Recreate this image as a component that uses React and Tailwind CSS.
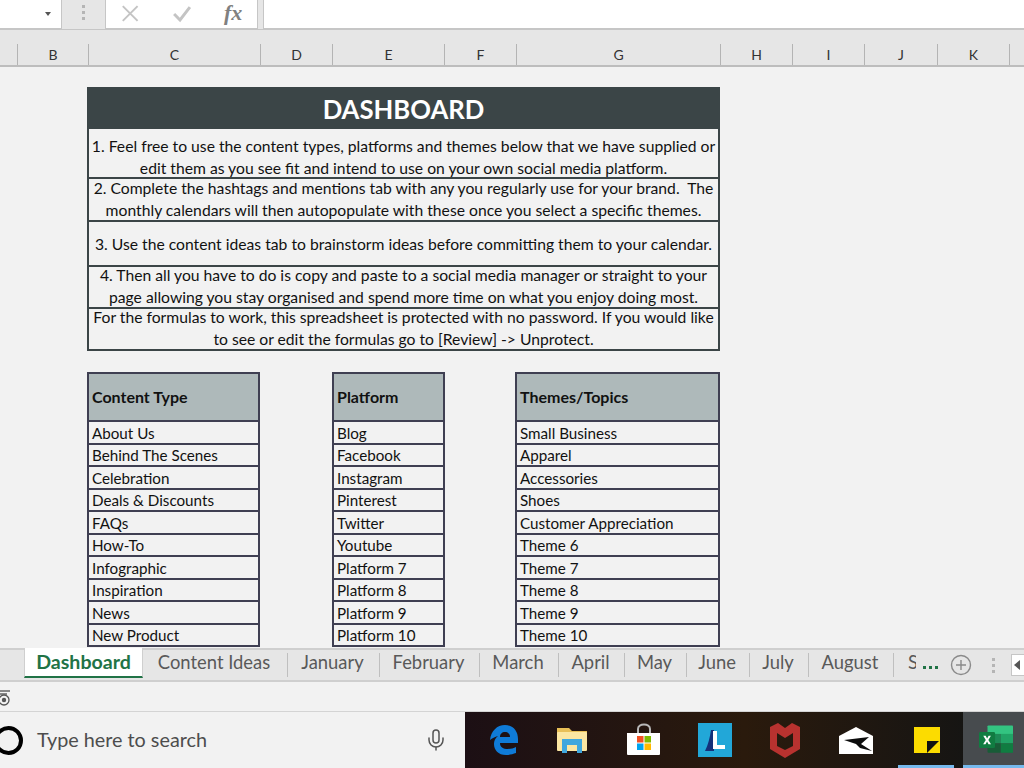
import React from "react";
import { Mic } from "lucide-react";

const columns = [
  ["", "w-[18px]"],
  ["B", "w-[71px]"],
  ["C", "w-[172px]"],
  ["D", "w-[72px]"],
  ["E", "w-[112px]"],
  ["F", "w-[72px]"],
  ["G", "w-[204px]"],
  ["H", "w-[72px]"],
  ["I", "w-[72px]"],
  ["J", "w-[73px]"],
  ["K", "w-[72px]"],
];

const notes = [
  {
    h: "h-[50px] pt-[8px]",
    lines: [
      "1. Feel free to use the content types, platforms and themes below that we have supplied or",
      "edit them as you see fit and intend to use on your own social media platform.",
    ],
  },
  {
    h: "h-[43px] pb-[1px]",
    lines: [
      "2. Complete the hashtags and mentions tab with any you regularly use for your brand.  The",
      "monthly calendars will then autopopulate with these once you select a specific themes.",
    ],
  },
  {
    h: "h-[45px]",
    lines: ["3. Use the content ideas tab to brainstorm ideas before committing them to your calendar."],
  },
  {
    h: "h-[42px] pb-[2px]",
    lines: [
      "4. Then all you have to do is copy and paste to a social media manager or straight to your",
      "page allowing you stay organised and spend more time on what you enjoy doing most.",
    ],
  },
  {
    h: "h-[42px] pb-[2px]",
    lines: [
      "For the formulas to work, this spreadsheet is protected with no password. If you would like",
      "to see or edit the formulas go to [Review] -> Unprotect.",
    ],
  },
];

const lists = [
  {
    title: "Content Type",
    w: "w-[173px]",
    items: ["About Us", "Behind The Scenes", "Celebration", "Deals & Discounts", "FAQs", "How-To", "Infographic", "Inspiration", "News", "New Product"],
  },
  {
    title: "Platform",
    w: "w-[113px]",
    items: ["Blog", "Facebook", "Instagram", "Pinterest", "Twitter", "Youtube", "Platform 7", "Platform 8", "Platform 9", "Platform 10"],
  },
  {
    title: "Themes/Topics",
    w: "w-[205px]",
    items: ["Small Business", "Apparel", "Accessories", "Shoes", "Customer Appreciation", "Theme 6", "Theme 7", "Theme 8", "Theme 9", "Theme 10"],
  },
];

const tabs = [
  ["Content Ideas", "w-[145px]"],
  ["January", "w-[92px]"],
  ["February", "w-[100px]"],
  ["March", "w-[79px]"],
  ["April", "w-[66px]"],
  ["May", "w-[62px]"],
  ["June", "w-[63px]"],
  ["July", "w-[59px]"],
  ["August", "w-[85px]"],
];

const Dots = () => (
  <div className="flex flex-col gap-[3px]">
    <span className="w-[3px] h-[3px] bg-[#b5b5b5]" />
    <span className="w-[3px] h-[3px] bg-[#b5b5b5]" />
    <span className="w-[3px] h-[3px] bg-[#b5b5b5]" />
  </div>
);

const FormulaBar = () => (
  <div className="flex h-[30px] bg-[#e6e6e6] border-b border-[#c6c6c6]">
    <div className="w-[62px] bg-white border-r border-b border-[#c6c6c6] flex items-center justify-end pr-[10px]">
      <span className="w-0 h-0 border-x-[3px] border-x-transparent border-t-[4px] border-t-[#555]" />
    </div>
    <div className="w-[43px] flex items-center justify-center pb-1">
      <Dots />
    </div>
    <div className="w-[153px] bg-white border-x border-b border-[#c6c6c6] relative flex items-center">
      <svg width="153" height="29" viewBox="0 0 153 29" fill="none">
        <path d="M17 6l15 15M32 6L17 21" stroke="#c4c4c4" strokeWidth="2" />
        <path d="M69 14l6 6 10-13" stroke="#c4c4c4" strokeWidth="3" />
      </svg>
      <span className="absolute left-[118px] top-0 text-[22px] leading-[26px] italic font-bold text-[#808080] font-['Liberation_Serif',serif]">
        fx
      </span>
    </div>
    <div className="w-[5px]" />
    <div className="flex-1 bg-white border-l border-b border-[#c6c6c6]" />
  </div>
);

const ColumnHeaders = () => (
  <div className="flex h-[37px] bg-[#e6e6e6] border-b-2 border-[#bdbdbd] pt-[14px]">
    {columns.map(([label, w], i) => (
      <div
        key={i}
        className={`${w} h-[21px] shrink-0 border-r border-[#b4b4b4] flex items-center justify-center text-[14px] text-[#333]`}
      >
        {label}
      </div>
    ))}
  </div>
);

const Dashboard = () => (
  <div className="w-[633px] border-2 border-[#3b4547] border-b-0">
    <div className="h-[40px] bg-[#3b4547] flex items-center justify-center pt-[1px] text-white font-bold text-[25.7px] leading-none">
      DASHBOARD
    </div>
    {notes.map((n, i) => (
      <div
        key={i}
        className={`${n.h} border-b-2 border-[#3b4547] flex flex-col items-center justify-center text-[15.7px] leading-[22px] text-[#111] whitespace-pre`}
      >
        {n.lines.map((l) => (
          <div key={l}>{l}</div>
        ))}
      </div>
    ))}
  </div>
);

const ListTable = ({ list }) => (
  <div className={`${list.w} shrink-0 border-x-2 border-t-2 border-[#3f3f52]`}>
    <div className="h-[48px] bg-[#aeb9ba] border-b-2 border-[#3f3f52] flex items-center pl-[3px] font-bold text-[16px] text-[#111]">
      {list.title}
    </div>
    {list.items.map((item) => (
      <div
        key={item}
        className="h-[22.5px] border-b-2 border-[#3f3f52] pl-[3px] flex items-center pt-[2px] text-[15.2px] leading-none text-[#111]"
      >
        {item}
      </div>
    ))}
  </div>
);

const Sheet = () => (
  <div className="h-[581px] bg-[#f2f2f2] overflow-hidden pl-[87px] pt-[20px]">
    <Dashboard />
    <div className="flex mt-[21px]">
      <ListTable list={lists[0]} />
      <div className="w-[72px] shrink-0" />
      <ListTable list={lists[1]} />
      <div className="w-[70px] shrink-0" />
      <ListTable list={lists[2]} />
    </div>
  </div>
);

const TabBar = () => (
  <div className="flex h-[34px] bg-[#e6e6e6] border-y-2 border-[#cfcfcf] text-[18.4px] text-[#595959]">
    <div className="w-[24px]" />
    <div className="w-[119px] h-[30px] -mt-[2px] bg-white border-x border-[#cfcfcf] border-b-2 border-b-[#217346] flex items-center justify-center font-bold text-[19.6px] text-[#217346]">
      Dashboard
    </div>
    {tabs.map(([t, w]) => (
      <div key={t} className={`${w} flex items-center justify-center`}>
        <div className="flex-1 text-center pb-[5px] pr-[2px]">{t}</div>
        <span className="w-px h-[24px] bg-[#bfbfbf]" />
      </div>
    ))}
    <div className="w-[22px] overflow-hidden pl-[14px] flex items-center pb-[5px]">S</div>
    <div className="w-[34px] flex items-center gap-[3px] pl-[7px] pt-[4px]">
      <span className="w-[3px] h-[3px] bg-[#217346]" />
      <span className="w-[3px] h-[3px] bg-[#217346]" />
      <span className="w-[3px] h-[3px] bg-[#217346]" />
    </div>
    <div className="w-[22px] flex items-center">
      <svg width="22" height="22" viewBox="0 0 22 22" fill="none" className="shrink-0">
        <circle cx="11" cy="11" r="9.5" stroke="#8a8a8a" strokeWidth="1.4" />
        <path d="M11 6v10M6 11h10" stroke="#8a8a8a" strokeWidth="1.4" />
      </svg>
    </div>
    <div className="w-[23px] flex items-center justify-end">
      <Dots />
    </div>
    <div className="flex-1 flex items-center justify-end">
      <div className="w-[13px] h-[22px] bg-white border border-[#c6c6c6] border-r-0 flex items-center pl-[2px]">
        <span className="w-0 h-0 border-y-[5px] border-y-transparent border-r-[6px] border-r-[#555]" />
      </div>
    </div>
  </div>
);

const StatusBar = () => (
  <div className="h-[30px] bg-[#f2f2f2] border-b border-[#d4d4d4] flex items-center overflow-hidden">
    <svg width="14" height="20" viewBox="0 0 14 20" fill="none" className="-ml-[2px]">
      <path d="M0 4h12M0 7h9" stroke="#666" strokeWidth="1.3" />
      <circle cx="6" cy="13" r="5" stroke="#555" strokeWidth="1.3" />
      <circle cx="6" cy="13" r="2.2" fill="#555" />
    </svg>
  </div>
);

const Edge = () => (
  <svg width="28" height="30" viewBox="0 0 28 30">
    <path
      d="M0 15C1 6 7 0 15 0c8 0 13 6 13 14v4H10c0 4 3 6 8 6 3 0 6-1 8-2v6c-3 1-6 2-10 2-8 0-12-5-12-11 0-3 1-6 4-8-3 1-6 2-8 4zm10-3h10c0-3-2-5-5-5s-5 2-5 5z"
      fill="#0f7bd8"
      fillRule="evenodd"
    />
  </svg>
);

const Folder = () => (
  <svg width="31" height="26" viewBox="0 0 31 26">
    <path d="M0 1h12l3 3h15v3H0z" fill="#e8bf57" />
    <rect x="0" y="5" width="30" height="19" rx="1" fill="#fbe6a2" />
    <path d="M5 24v-12h20v12h-5v-6h-10v6z" fill="#3fa7de" />
    <rect x="5" y="24" width="5" height="2" fill="#3fa7de" />
    <rect x="20" y="24" width="5" height="2" fill="#3fa7de" />
  </svg>
);

const Store = () => (
  <svg width="34" height="34" viewBox="0 0 34 34" fill="none">
    <path d="M11 10V6c0-6 12-6 12 0v4" stroke="#b8b8b8" strokeWidth="2" />
    <path d="M0 10h33v21a1 1 0 0 1-1 1H1a1 1 0 0 1-1-1z" fill="#fff" />
    <rect x="10" y="13" width="6.5" height="6.5" fill="#f25022" />
    <rect x="17.5" y="13" width="6.5" height="6.5" fill="#7fba00" />
    <rect x="10" y="20.5" width="6.5" height="6.5" fill="#00a4ef" />
    <rect x="17.5" y="20.5" width="6.5" height="6.5" fill="#ffb900" />
  </svg>
);

const LogoL = () => (
  <svg width="34" height="34" viewBox="0 0 34 34">
    <rect width="34" height="34" fill="#22a7d8" />
    <path d="M7 28c3-6 5-14 6-21h3v21z" fill="#15307a" />
    <path d="M15 8h4v14h8v4H15z" fill="#fff" />
  </svg>
);

const McAfee = () => (
  <svg width="30" height="35" viewBox="0 0 30 35">
    <path
      d="M0 4l8-4 7 5 7-5 8 4v22l-15 9-15-9zm7 6v13l8 4 8-4V10l-8 5z"
      fill="#b8322f"
      fillRule="evenodd"
    />
  </svg>
);

const Mail = () => (
  <svg width="34" height="27" viewBox="0 0 34 27">
    <path d="M0 9L17 0l17 9v18H0z" fill="#fff" />
    <path d="M5 13l25-3-8 7 11 7-12-3-4-4z" fill="#0c0c0c" />
  </svg>
);

const Sticky = () => (
  <svg width="26" height="26" viewBox="0 0 26 26">
    <rect width="26" height="26" fill="#fcdc00" />
    <path d="M13 14h12L13 26z" fill="#111" />
  </svg>
);

const Excel = () => (
  <svg width="34" height="31" viewBox="0 0 36 32">
    <path d="M9 1a1 1 0 0 1 1-1h25a1 1 0 0 1 1 1v8H9z" fill="#33c481" />
    <rect x="9" y="9" width="14" height="10" fill="#1d8a56" />
    <rect x="23" y="9" width="13" height="10" fill="#21a366" />
    <rect x="23" y="19" width="13" height="10" fill="#107c41" />
    <path d="M9 19h14v10H10a1 1 0 0 1-1-1z" fill="#185c37" />
    <rect x="0" y="7" width="17" height="17" rx="1.5" fill="#107c41" />
    <path d="M4.5 11h2.6l1.5 3 1.6-3h2.4l-2.7 4.5 2.8 4.5h-2.6l-1.6-3-1.6 3H4.4l2.8-4.5z" fill="#fff" />
  </svg>
);

const TaskIcon = ({ w, children }) => (
  <div className={`${w} h-full flex items-center justify-center shrink-0`}>{children}</div>
);

const Taskbar = () => (
  <div className="flex h-[56px]">
    <div className="w-[465px] bg-[#f2f2f2] flex items-center overflow-hidden">
      <span className="shrink-0 -ml-[6px] w-[29px] h-[29px] rounded-full border-[4px] border-black" />
      <span className="ml-[14px] text-[19.8px] text-[#4d4d4d]">Type here to search</span>
      <Mic className="ml-auto mr-[17px] text-[#555]" size={24} strokeWidth={1.5} />
    </div>
    <div className="flex-1 flex items-center bg-gradient-to-r from-[#1c0f14] via-[#2a1a0c] to-[#101314]">
      <TaskIcon w="w-[77px]"><Edge /></TaskIcon>
      <TaskIcon w="w-[61px]"><Folder /></TaskIcon>
      <TaskIcon w="w-[81px]"><Store /></TaskIcon>
      <TaskIcon w="w-[61px]"><LogoL /></TaskIcon>
      <TaskIcon w="w-[80px]"><McAfee /></TaskIcon>
      <TaskIcon w="w-[62px]"><Mail /></TaskIcon>
      <div className="w-[76px] h-full relative flex items-center justify-center shrink-0 pl-[4px]">
        <Sticky />
        <span className="absolute bottom-0 left-[11px] w-[56px] h-[3px] bg-[#76b9ed]" />
      </div>
      <div className="flex-1 h-full relative bg-[#474b4e] flex items-center justify-center pl-[4px]">
        <Excel />
        <span className="absolute bottom-0 left-0 right-0 h-[3px] bg-[#76b9ed]" />
      </div>
    </div>
  </div>
);

export default function App() {
  return (
    <div className="w-[1024px] h-[768px] overflow-hidden font-['Lato','Noto_Sans',sans-serif]">
      <FormulaBar />
      <ColumnHeaders />
      <Sheet />
      <TabBar />
      <StatusBar />
      <Taskbar />
    </div>
  );
}
